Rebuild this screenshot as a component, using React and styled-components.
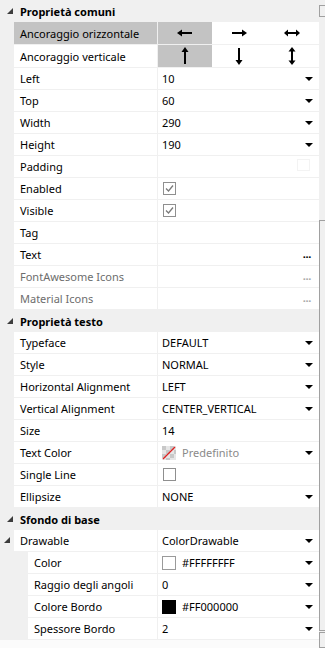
import React from "react";
import styled, { createGlobalStyle } from "styled-components";

const GlobalStyle = createGlobalStyle`
  html, body {
    margin: 0;
    padding: 0;
    background: #f0f0f0;
  }
  body {
    font-family: "Noto Sans", "Open Sans", sans-serif;
    font-size: 11px;
    color: #000;
  }
`;

const Page = styled.div`
  width: 325px;
  height: 648px;
  display: flex;
  overflow: hidden;
  background: #f0f0f0;
`;

const Grid = styled.div`
  width: 319px;
  display: flex;
  flex-direction: column;
`;

const Edge = styled.div`
  flex: 1;
  display: flex;
  flex-direction: column;
  padding-top: 5px;
`;

const EdgeBox = styled.div`
  height: ${(p) => p.h}px;
  margin-top: ${(p) => p.gap || 0}px;
  border: 1px solid #a0a0a0;
  border-right: none;
`;

const Header = styled.div`
  height: 22px;
  display: flex;
  align-items: center;
  font-weight: 700;
  background: #f0f0f0;
`;

const Toggle = styled.div`
  width: ${(p) => p.w || 20}px;
  display: flex;
  justify-content: center;
  svg {
    display: block;
  }
`;

const Row = styled.div`
  height: ${(p) => (p.tall ? 23 : 22)}px;
  display: flex;
  box-sizing: border-box;
  border-bottom: 1px solid #f0f0f0;
`;

const Gutter = styled.div`
  width: ${(p) => p.w}px;
  flex-shrink: 0;
  display: flex;
  align-items: center;
  background: #f0f0f0;
`;

const Label = styled.div`
  width: ${(p) => p.w}px;
  flex-shrink: 0;
  box-sizing: border-box;
  padding-left: 6px;
  display: flex;
  align-items: center;
  border-right: 1px solid #f0f0f0;
  background: ${(p) => (p.selected ? "#c3c3c3" : "#fff")};
  color: ${(p) => (p.disabled ? "#6d6d6d" : "#000")};
  white-space: nowrap;
`;

const Value = styled.div`
  flex: 1;
  display: flex;
  align-items: center;
  padding: 0 5px 0 4px;
  background: #fff;
  color: ${(p) => (p.muted ? "#8a8a8a" : "#000")};
  white-space: nowrap;
`;

const ValueText = styled.span`
  flex: 1;
`;

const Caret = styled.span`
  width: 0;
  height: 0;
  border-left: 4px solid transparent;
  border-right: 4px solid transparent;
  border-top: 4px solid #000;
  margin-right: 1px;
`;

const Dots = styled.span`
  font-weight: 700;
  letter-spacing: -0.3px;
  color: ${(p) => (p.muted ? "#a8a8a8" : "#000")};
  margin-bottom: 3px;
  margin-right: 3px;
`;

const AnchorCells = styled.div`
  flex: 1;
  display: flex;
  background: #fff;
`;

const AnchorCell = styled.div`
  flex: 1;
  display: flex;
  align-items: center;
  justify-content: center;
  background: ${(p) => (p.active ? "#c3c3c3" : "#fff")};
`;

const Check = styled.span`
  width: 11px;
  height: 11px;
  border: 1px solid #8f8f8f;
  margin-left: 1px;
  display: flex;
  align-items: center;
  justify-content: center;
  background: #fff;
`;

const Swatch = styled.span`
  width: 12px;
  height: 12px;
  border: 1px solid ${(p) => (p.fill === "#000" ? "#000" : "#9a9a9a")};
  background: ${(p) => p.fill};
  margin-right: 6px;
`;

const Faint = styled.span`
  width: 11px;
  height: 10px;
  border: 1px solid #f3f3f3;
  margin-left: auto;
  margin-right: 4px;
  margin-bottom: 4px;
`;

const Footer = styled.div`
  flex: 1;
  background: #fbfbfb;
`;

const Triangle = () => (
  <svg width="7" height="7" viewBox="0 0 7 7">
    <polygon points="6,0 6,6 0,6" fill="#3c3c3c" />
  </svg>
);

const Arrow = ({ dir }) => {
  const horiz = {
    left: (
      <>
        <rect x="3" y="6" width="12" height="2" fill="#000" />
        <polygon points="0,7 5,3.5 5,10.5" fill="#000" />
      </>
    ),
    right: (
      <>
        <rect x="1" y="6" width="12" height="2" fill="#000" />
        <polygon points="16,7 11,3.5 11,10.5" fill="#000" />
      </>
    ),
    both: (
      <>
        <rect x="3" y="6" width="10" height="2" fill="#000" />
        <polygon points="0,7 4,3.5 4,10.5" fill="#000" />
        <polygon points="16,7 12,3.5 12,10.5" fill="#000" />
      </>
    ),
  };
  const vert = {
    up: (
      <>
        <rect x="6" y="3" width="2" height="14" fill="#000" />
        <polygon points="7,0 3.5,5 10.5,5" fill="#000" />
      </>
    ),
    down: (
      <>
        <rect x="6" y="1" width="2" height="14" fill="#000" />
        <polygon points="7,18 3.5,13 10.5,13" fill="#000" />
      </>
    ),
    both: (
      <>
        <rect x="6" y="3" width="2" height="12" fill="#000" />
        <polygon points="7,0 3.5,4.5 10.5,4.5" fill="#000" />
        <polygon points="7,18 3.5,13.5 10.5,13.5" fill="#000" />
      </>
    ),
  };
  if (dir.startsWith("h-")) {
    return (
      <svg width="16" height="14" viewBox="0 0 16 14">
        {horiz[dir.slice(2)]}
      </svg>
    );
  }
  return (
    <svg width="14" height="18" viewBox="0 0 14 18">
      {vert[dir.slice(2)]}
    </svg>
  );
};

const Tick = () => (
  <svg width="9" height="9" viewBox="0 0 9 9">
    <polyline points="1,4.5 3.5,7 8,1.5" fill="none" stroke="#7a7a7a" strokeWidth="1.3" />
  </svg>
);

const NoColor = () => (
  <svg width="14" height="14" viewBox="0 0 14 14" style={{ marginRight: 6 }}>
    <rect x="0" y="0" width="14" height="14" fill="#e6e6e6" />
    <rect x="0" y="0" width="4" height="4" fill="#c8c8c8" />
    <rect x="8" y="0" width="4" height="4" fill="#c8c8c8" />
    <rect x="4" y="4" width="4" height="4" fill="#c8c8c8" />
    <rect x="12" y="4" width="2" height="4" fill="#c8c8c8" />
    <rect x="0" y="8" width="4" height="4" fill="#c8c8c8" />
    <rect x="8" y="8" width="4" height="4" fill="#c8c8c8" />
    <rect x="4" y="12" width="4" height="2" fill="#c8c8c8" />
    <line x1="1" y1="13" x2="13" y2="1" stroke="#e02020" strokeWidth="1.2" />
  </svg>
);

const Prop = ({ label, children, sub, disabled, selected, toggle, tall }) => (
  <Row tall={tall}>
    <Gutter w={sub ? 28 : 14}>
      {toggle && (
        <Toggle w={14}>
          <Triangle />
        </Toggle>
      )}
    </Gutter>
    <Label w={sub ? 130 : 144} disabled={disabled} selected={selected}>
      {label}
    </Label>
    {children}
  </Row>
);

const Drop = ({ label, value, ...rest }) => (
  <Prop label={label} {...rest}>
    <Value>
      <ValueText>{value}</ValueText>
      <Caret />
    </Value>
  </Prop>
);

const Plain = ({ label, value, ...rest }) => (
  <Prop label={label} {...rest}>
    <Value>
      <ValueText>{value}</ValueText>
    </Value>
  </Prop>
);

const Ellipsis = ({ label, muted }) => (
  <Prop label={label} disabled={muted}>
    <Value>
      <ValueText />
      <Dots muted={muted}>...</Dots>
    </Value>
  </Prop>
);

const CheckRow = ({ label, checked }) => (
  <Prop label={label}>
    <Value>
      <Check>{checked && <Tick />}</Check>
    </Value>
  </Prop>
);

const ColorRow = ({ label, fill, value, sub }) => (
  <Prop label={label} sub={sub}>
    <Value>
      <Swatch fill={fill} />
      <ValueText>{value}</ValueText>
      <Caret />
    </Value>
  </Prop>
);

const Section = ({ title }) => (
  <Header>
    <Toggle>
      <Triangle />
    </Toggle>
    {title}
  </Header>
);

export default function App() {
  return (
    <>
      <GlobalStyle />
      <Page>
        <Grid>
          <Section title="Proprietà comuni" />
          <Prop label="Ancoraggio orizzontale" selected tall>
            <AnchorCells>
              <AnchorCell active>
                <Arrow dir="h-left" />
              </AnchorCell>
              <AnchorCell>
                <Arrow dir="h-right" />
              </AnchorCell>
              <AnchorCell>
                <Arrow dir="h-both" />
              </AnchorCell>
            </AnchorCells>
          </Prop>
          <Prop label="Ancoraggio verticale" tall>
            <AnchorCells>
              <AnchorCell active>
                <Arrow dir="v-up" />
              </AnchorCell>
              <AnchorCell>
                <Arrow dir="v-down" />
              </AnchorCell>
              <AnchorCell>
                <Arrow dir="v-both" />
              </AnchorCell>
            </AnchorCells>
          </Prop>
          <Drop label="Left" value="10" />
          <Drop label="Top" value="60" />
          <Drop label="Width" value="290" />
          <Drop label="Height" value="190" />
          <Prop label="Padding">
            <Value>
              <Faint />
            </Value>
          </Prop>
          <CheckRow label="Enabled" checked />
          <CheckRow label="Visible" checked />
          <Plain label="Tag" value="" />
          <Ellipsis label="Text" />
          <Ellipsis label="FontAwesome Icons" muted />
          <Ellipsis label="Material Icons" muted />

          <Section title="Proprietà testo" />
          <Drop label="Typeface" value="DEFAULT" />
          <Drop label="Style" value="NORMAL" />
          <Drop label="Horizontal Alignment" value="LEFT" />
          <Drop label="Vertical Alignment" value="CENTER_VERTICAL" />
          <Plain label="Size" value="14" />
          <Prop label="Text Color">
            <Value muted>
              <NoColor />
              <ValueText>Predefinito</ValueText>
              <Caret />
            </Value>
          </Prop>
          <CheckRow label="Single Line" />
          <Drop label="Ellipsize" value="NONE" />

          <Section title="Sfondo di base" />
          <Drop label="Drawable" value="ColorDrawable" toggle />
          <ColorRow label="Color" fill="#fff" value="#FFFFFFFF" sub />
          <Drop label="Raggio degli angoli" value="0" sub />
          <ColorRow label="Colore Bordo" fill="#000" value="#FF000000" sub />
          <Drop label="Spessore Bordo" value="2" sub />
          <Footer />
        </Grid>
        <Edge>
          <EdgeBox h={10} />
          <EdgeBox h={410} gap={203} />
          <EdgeBox h={14} gap={1} />
        </Edge>
      </Page>
    </>
  );
}
